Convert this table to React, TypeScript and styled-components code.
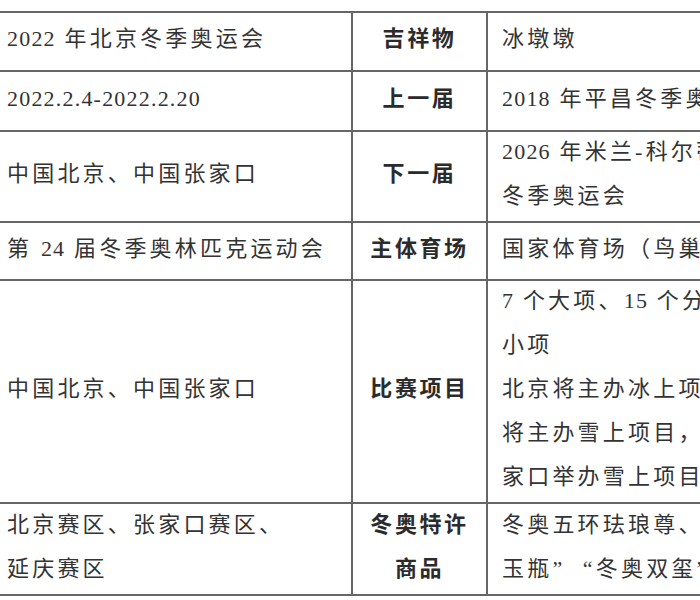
import React from 'react';
import styled, { createGlobalStyle } from 'styled-components';

const GlobalStyle = createGlobalStyle`
  html, body {
    margin: 0;
    padding: 0;
    background: #fff;
  }
  body {
    font-family: "Liberation Serif", "Noto Sans CJK SC", serif;
    color: #333;
  }
`;

const Page = styled.div`
  width: 700px;
  height: 600px;
  overflow: hidden;
  padding-top: 11px;
  box-sizing: border-box;
`;

const Sheet = styled.div`
  width: 860px;
  border-top: 2px solid #666;
  display: flex;
  flex-direction: column;
`;

const Row = styled.div<{ $h: number }>`
  display: grid;
  grid-template-columns: 353px 135px 1fr;
  height: ${p => p.$h}px;
  border-bottom: 2px solid #666;
`;

const Cell = styled.div<{ $pad?: number }>`
  display: flex;
  flex-direction: column;
  justify-content: center;
  align-items: flex-start;
  padding-left: ${p => p.$pad ?? 14}px;
  padding-bottom: 5px;
  font-size: 22px;
  line-height: 44px;
  letter-spacing: 3.2px;
  white-space: nowrap;
  overflow: hidden;
  border-right: 2px solid #666;

  &:last-child {
    border-right: none;
  }
`;

const Label = styled(Cell)`
  align-items: center;
  padding-left: 0;
  font-weight: 700;
  letter-spacing: 2.6px;
  color: #2b2b2b;
`;

const Line = styled.span`
  display: block;
`;

// digits in the scan sit tighter than the CJK characters around them
const Num = styled.span`
  letter-spacing: 1.2px;
`;

type Entry = {
  h: number;
  left: React.ReactNode[];
  label: string[];
  right: React.ReactNode[];
};

const rows: Entry[] = [
  { h: 57, left: [<><Num>2022</Num> 年北京冬季奥运会</>], label: ['吉祥物'], right: ['冰墩墩'] },
  {
    h: 58,
    left: [<Num>2022.2.4-2022.2.20</Num>],
    label: ['上一届'],
    right: [<><Num>2018</Num> 年平昌冬季奥运会</>],
  },
  {
    h: 89,
    left: ['中国北京、中国张家口'],
    label: ['下一届'],
    right: [<><Num>2026</Num> 年米兰-科尔蒂纳丹佩佐</>, '冬季奥运会'],
  },
  {
    h: 56,
    left: [<>第 <Num>24</Num> 届冬季奥林匹克运动会</>],
    label: ['主体育场'],
    right: ['国家体育场（鸟巢）'],
  },
  {
    h: 221,
    left: ['中国北京、中国张家口'],
    label: ['比赛项目'],
    right: [
      <><Num>7</Num> 个大项、<Num>15</Num> 个分项、<Num>109</Num> 个</>,
      '小项',
      '北京将主办冰上项目，延庆',
      '将主办雪上项目，张',
      '家口举办雪上项目',
    ],
  },
  {
    h: 90,
    left: ['北京赛区、张家口赛区、', '延庆赛区'],
    label: ['冬奥特许', '商品'],
    right: ['冬奥五环珐琅尊、“冰墩墩', '玉瓶”\u00a0\u00a0“冬奥双玺”'],
  },
];

export default function App() {
  return (
    <>
      <GlobalStyle />
      <Page>
        <Sheet>
          {rows.map((r, i) => (
            <Row key={i} $h={r.h}>
              <Cell $pad={7}>
                {r.left.map((t, j) => (
                  <Line key={j}>{t}</Line>
                ))}
              </Cell>
              <Label>
                {r.label.map(t => (
                  <Line key={t}>{t}</Line>
                ))}
              </Label>
              <Cell>
                {r.right.map((t, j) => (
                  <Line key={j}>{t}</Line>
                ))}
              </Cell>
            </Row>
          ))}
        </Sheet>
      </Page>
    </>
  );
}
